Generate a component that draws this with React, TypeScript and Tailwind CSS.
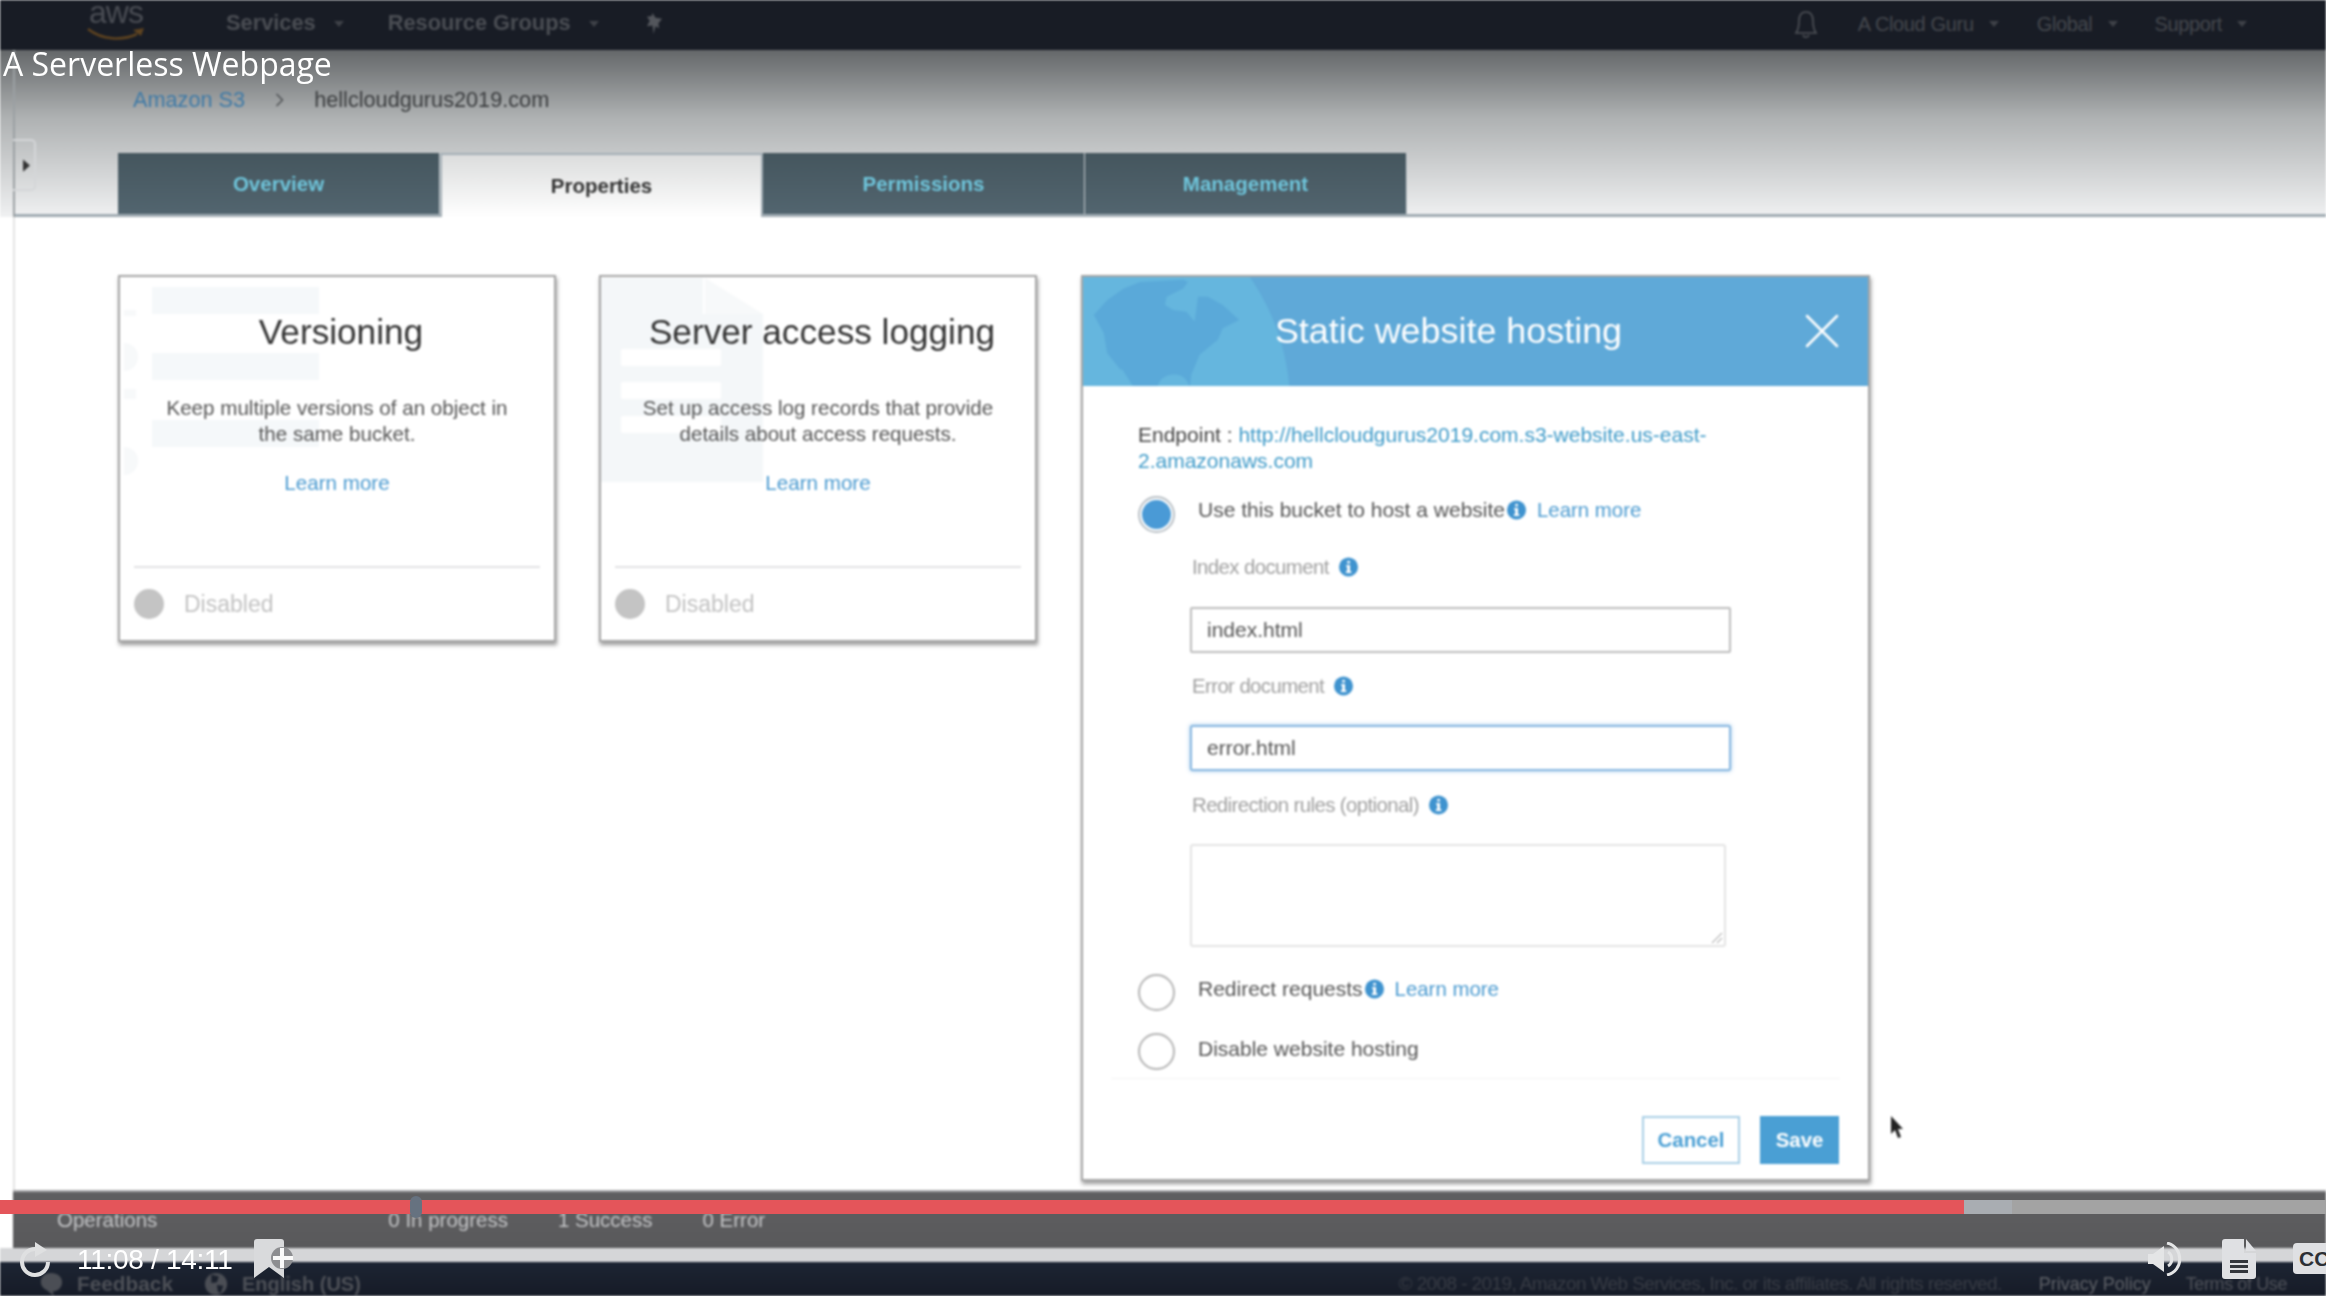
import React from "react";
import { X } from "lucide-react";

function Info({ className = "" }: { className?: string }) {
  return (
    <svg viewBox="0 0 20 20" className={`w-[19px] h-[20px] shrink-0 ${className}`}>
      <circle cx="10" cy="10" r="10" fill="#3f93cf" />
      <rect x="8.6" y="3.4" width="3" height="3" rx="1.4" fill="#fff" />
      <path d="M7.6 8h4v6.6h1.4V16.4H7.2v-1.8h1.4V9.8h-1z" fill="#fff" />
    </svg>
  );
}

function Caret({ dim = "#3f4248" }: { dim?: string }) {
  return (
    <svg viewBox="0 0 10 6" className="w-[10px] h-[6px]">
      <path d="M0 0h10L5 6z" fill={dim} />
    </svg>
  );
}

function Card({ title, lines, art }: { title: string; lines: string[]; art: React.ReactNode }) {
  return (
    <div className="relative w-[438px] h-[367px] flex flex-col items-stretch bg-white border-2 border-[#a6a6a6] shadow-[1px_3px_4px_rgba(0,0,0,0.4)] overflow-hidden">
      {art}
      <div className="relative text-center text-[35.2px] leading-[40px] text-[#333] pt-[35px] pl-[8px]">{title}</div>
      <div className="relative text-center text-[20.6px] leading-[26px] text-[#555] mt-[43px]">
        {lines.map((l) => (
          <div key={l}>{l}</div>
        ))}
      </div>
      <div className="relative text-center text-[20.6px] leading-[26px] text-[#4a9ad0] mt-[23px]">Learn more</div>
      <div className="relative mt-auto mx-[14px] border-t-2 border-[#e2e2e4] h-[74px] flex items-center gap-[20px]">
        <div className="w-[30px] h-[30px] rounded-full bg-[#c4c4c4]" />
        <div className="text-[23px] text-[#c2c2c2]">Disabled</div>
      </div>
    </div>
  );
}

function Radio({ on = false }: { on?: boolean }) {
  return (
    <div
      className={`w-[37px] h-[37px] rounded-full border-2 shrink-0 flex items-center justify-center bg-white ${on ? "border-[#b9c0c6]" : "border-[#b5b5b5]"}`}
    >
      {on && <div className="w-[29px] h-[29px] rounded-full bg-[#4a9ad6]" />}
    </div>
  );
}

function FieldLabel({ text }: { text: string }) {
  return (
    <div className="flex items-center gap-[10px] h-[24px] pl-[2px] text-[20.4px] text-[#a0a0a0] tracking-[-0.6px]">
      <span>{text}</span>
      <Info />
    </div>
  );
}

export default function App() {
  return (
    <div
      className="relative w-[2326px] h-[1296px] overflow-hidden flex flex-col bg-white"
      style={{ fontFamily: '"Liberation Sans", Arial, sans-serif' }}
    >
      <div className="flex flex-col h-full blur-[0.8px]">
        {/* AWS nav */}
        <div className="h-[50px] shrink-0 bg-[#181c25] flex items-center pb-[3px] text-[#4b4e54] text-[21.8px] font-bold">
          <div className="w-[60px] h-[47px] ml-[86px]">
            <div className="text-[32px] font-normal leading-[24px] text-center tracking-[-1px] text-[#4a4d54]">aws</div>
            <svg viewBox="0 0 60 14" className="w-[60px] h-[14px] mt-[3px]">
              <path d="M2 2c14 11 34 12 49 5" stroke="#5e4320" strokeWidth="2.6" fill="none" />
              <path d="M47 3l11-2-3 8z" fill="#5e4320" />
            </svg>
          </div>
          <span className="ml-[80px]">Services</span>
          <span className="ml-[18px]"><Caret /></span>
          <span className="ml-[44px]">Resource Groups</span>
          <span className="ml-[18px]"><Caret /></span>
          <svg viewBox="0 0 20 22" className="ml-[46px] w-[19px] h-[21px]">
            <path d="M8 0l3 5 7 1-4 5 1 5-4-2-2 8-1-9-6 1 3-6-3-4 5-1z" fill="#53565c" />
          </svg>
          <div className="ml-auto flex items-center font-normal text-[#45484e] text-[20px] tracking-[-0.35px]">
            <svg viewBox="0 0 24 28" className="w-[24px] h-[28px] mr-[40px] mt-[3px]" fill="none" stroke="#4f5258" strokeWidth="1.6">
              <path d="M12 1c-5 0-7 4-7 9 0 6-1 9-3 12h20c-2-3-3-6-3-12 0-5-2-9-7-9zM9 24c1 3 5 3 6 0" />
            </svg>
            <span>A Cloud Guru</span>
            <span className="ml-[15px]"><Caret /></span>
            <span className="ml-[38px]">Global</span>
            <span className="ml-[16px]"><Caret /></span>
            <span className="ml-[36px]">Support</span>
            <span className="ml-[15px] mr-[79px]"><Caret /></span>
          </div>
        </div>

        {/* Middle */}
        <div className="flex-1 flex flex-col min-h-0">
          {/* gradient header with breadcrumb and tabs */}
          <div className="h-[167px] shrink-0 bg-gradient-to-b from-[#65686a] via-[#aeb1b2] via-40% to-[#f0f1f2]">
            <div className="relative ml-[13px] h-full border-l-2 border-[#9ba0a3] flex flex-col">
              <div className="h-[103px] pl-[118px] pt-[38px] flex items-start text-[21.7px] leading-[24px]">
                <span className="text-[#3f7aa6]">Amazon S3</span>
                <span className="ml-[30px] text-[#4b4e50]">
                  <svg viewBox="0 0 8 14" className="w-[9px] h-[14px] mt-[5px]" fill="none" stroke="#4b4e50" strokeWidth="1.4"><path d="M1 1l6 6-6 6" /></svg>
                </span>
                <span className="ml-[30px] text-[#3a3c3e]">hellcloudgurus2019.com</span>
              </div>
              <div className="flex-1 flex items-stretch pl-[103px] border-b-[3px] border-[#a0abb2]">
                {["Overview", "Properties", "Permissions", "Management"].map((t, i) => (
                  <div
                    key={t}
                    className={
                      i === 1
                        ? "w-[323px] -mb-[3px] bg-gradient-to-b from-[#dcdddd] to-white border-x-2 border-t-2 border-[#a3aeb5] flex items-center justify-center text-[20.5px] font-bold text-[#333]"
                        : "w-[322px] bg-gradient-to-b from-[#45565e] to-[#52656f] border-r border-[#c7ccd0] flex items-center justify-center pt-[1px] text-[20.5px] font-bold text-[#6fc5db]"
                    }
                  >
                    {t}
                  </div>
                ))}
              </div>
              {/* drawer handle */}
              <div className="absolute left-[-2px] top-[89px] w-[23px] h-[52px] border-2 border-l-0 border-[#d4d6d8] rounded-r-[5px] flex items-center pl-[10px]">
                <svg viewBox="0 0 8 14" className="w-[7px] h-[13px]"><path d="M0 0l8 7-8 7z" fill="#333" /></svg>
              </div>
            </div>
          </div>

          {/* content */}
          <div className="flex-1 min-h-0 ml-[13px] border-l-2 border-[#e4e4e4] flex items-start gap-[43px] pl-[103px] pt-[58px]">
            <Card
              title="Versioning"
              lines={["Keep multiple versions of an object in", "the same bucket."]}
              art={
                <svg className="absolute left-0 top-0" width="220" height="240" viewBox="0 0 220 240">
                  <rect x="32" y="10" width="167" height="27" fill="#f5f8fa" />
                  <rect x="32" y="76" width="167" height="27" fill="#f5f8fa" />
                  <rect x="32" y="143" width="167" height="27" fill="#f5f8fa" />
                  <rect x="4" y="33" width="12" height="6" fill="#f7f9fa" />
                  <path d="M4 66a14 14 0 0 1 0 28zM4 170a14 14 0 0 1 0 28z" fill="#f7f9fa" />
                  <rect x="4" y="112" width="12" height="10" fill="#f7f9fa" />
                </svg>
              }
            />
            <Card
              title="Server access logging"
              lines={["Set up access log records that provide", "details about access requests."]}
              art={
                <svg className="absolute left-0 top-0" width="180" height="210" viewBox="0 0 180 210">
                  <path d="M0 1h102v36h60v168H0z" fill="#f4f7f9" />
                  <path d="M104 1l58 36h-58z" fill="#f7f9fa" />
                  <rect x="20" y="72" width="100" height="17" rx="2" fill="#fff" />
                  <rect x="20" y="105" width="100" height="17" rx="2" fill="#fff" />
                  <rect x="20" y="139" width="100" height="17" rx="2" fill="#fff" />
                </svg>
              }
            />

            {/* Static website hosting panel */}
            <div className="relative ml-[1px] w-[789px] h-[906px] bg-white border-2 border-[#a6a6a6] shadow-[1px_3px_4px_rgba(0,0,0,0.4)] flex flex-col">
              <div className="relative h-[109px] shrink-0 bg-[#5fa9d8] overflow-hidden flex items-center justify-center text-white">
                <svg className="absolute left-0 top-0" width="220" height="111" viewBox="0 0 660 336">
                  <circle cx="-60" cy="390" r="684" fill="#65b6de" />
                  <path
                    d="M30 115L70 70 120 35 170 15 300 8 315 15 300 35 250 60 245 85 270 100 310 105 335 135 345 60 375 60 420 85 470 130 420 155 405 190 350 235 325 295 320 336 150 336 110 280 70 230 60 170z"
                    fill="#5aa9d9"
                  />
                  <path d="M222 336c5-30 30-44 60-40 20 3 34 18 38 40z" fill="#65b6de" />
                  <path d="M108 280l36 56h8l-36-56z" fill="#65b6de" />
                </svg>
                <span className="relative text-[35.9px] ml-[-54px]">Static website hosting</span>
                <X className="absolute right-[16px] top-[24px]" size={60} strokeWidth={1} color="#fff" />
              </div>

              <div className="flex-1 pl-[55px] flex flex-col text-[21px] text-[#555]">
                <div className="mt-[36px] w-[600px] leading-[26px] text-[#444]">
                  Endpoint : <span className="text-[#3e9ac8]">http://hellcloudgurus2019.com.s3-website.us-east-2.amazonaws.com</span>
                </div>
                <div className="mt-[22px] flex items-start">
                  <Radio on />
                  <div className="ml-[23px] mt-[2px] flex items-center h-[24px]">
                    <span>Use this bucket to host a website</span>
                    <Info className="ml-[2px]" />
                    <span className="ml-[11px] text-[20.4px] text-[#4a9ad0]">Learn more</span>
                  </div>
                </div>
                <div className="ml-[52px] flex flex-col">
                  <div className="mt-[22px]"><FieldLabel text="Index document" /></div>
                  <div className="mt-[28px] w-[541px] h-[46px] border-2 border-[#bcbcbc] rounded-[2px] flex items-center pl-[15px] text-[#555]">index.html</div>
                  <div className="mt-[21px]"><FieldLabel text="Error document" /></div>
                  <div className="mt-[27px] w-[541px] h-[46px] border-2 border-[#86b6e0] rounded-[2px] shadow-[0_0_4px_rgba(90,160,220,0.6)] flex items-center pl-[15px] text-[#555]">error.html</div>
                  <div className="mt-[22px]"><FieldLabel text="Redirection rules (optional)" /></div>
                  <div className="relative mt-[27px] w-[536px] h-[103px] border-2 border-[#e4e4e4] rounded-[3px]">
                    <svg className="absolute right-[1px] bottom-[1px]" width="12" height="12" viewBox="0 0 12 12" fill="none" stroke="#8a8a8a" strokeWidth="1">
                      <path d="M1 11L11 1M6 11l5-5" />
                    </svg>
                  </div>
                </div>
                <div className="mt-[27px] flex items-start">
                  <Radio />
                  <div className="ml-[23px] mt-[3px] flex items-center h-[24px]">
                    <span>Redirect requests</span>
                    <Info className="ml-[2px]" />
                    <span className="ml-[11px] text-[20.4px] text-[#4a9ad0]">Learn more</span>
                  </div>
                </div>
                <div className="mt-[22px] flex items-start">
                  <Radio />
                  <div className="ml-[23px] mt-[4px] h-[24px] flex items-center">Disable website hosting</div>
                </div>
                <div className="mt-[8px] mr-[28px] ml-[-27px] border-t border-[#f4f4f4]" />
                <div className="mt-[37px] mr-[29px] flex justify-end gap-[20px] text-[20.4px] font-bold">
                  <div className="w-[98px] h-[48px] border-2 border-[#a9cfe6] text-[#4a9fd4] flex items-center justify-center">Cancel</div>
                  <div className="w-[79px] h-[48px] bg-[#4a9fd4] text-white flex items-center justify-center">Save</div>
                </div>
              </div>

              {/* mouse pointer */}
              <svg className="absolute left-[807px] top-[839px]" width="14" height="24" viewBox="0 0 14 24">
                <path d="M1 0v18l4-4 3 8 3-1-3-8h5z" fill="#222" />
              </svg>
            </div>
          </div>

          {/* operations bar */}
          <div className="h-[58px] shrink-0 ml-[13px] bg-gradient-to-b from-[#5f5f61] to-[#59595b] border-t-2 border-[#a7a7a9] flex items-end pb-[12px] pl-[44px] text-[20.5px] text-[#c3c4c6]">
            <span>Operations</span>
            <span className="ml-[231px]">0 In progress</span>
            <span className="ml-[50px]">1 Success</span>
            <span className="ml-[50px]">0 Error</span>
          </div>
          <div className="h-[14px] shrink-0 bg-[#d5d6d8]" />
        </div>

        {/* footer */}
        <div className="h-[34px] shrink-0 pt-[10px] bg-gradient-to-b from-[#1d2533] to-[#161b27] flex items-center text-[20px] leading-[24px] text-[#4d5057]">
          <svg className="ml-[38px]" width="26" height="24" viewBox="0 0 26 26"><path d="M13 1c7 0 12 4 12 10s-5 10-10 10l1 5-7-6c-4-2-7-5-7-9C2 5 6 1 13 1z" fill="#4b4e55" /></svg>
          <span className="ml-[13px] text-[20.8px] font-bold">Feedback</span>
          <svg className="ml-[30px]" width="26" height="24" viewBox="0 0 26 26"><circle cx="13" cy="13" r="12" fill="#4b4e55" /><path d="M8 3l8 2-2 6-6 1zM14 14l7 1-3 8-3-2z" fill="#1a202c" /></svg>
          <span className="ml-[13px] font-bold">English (US)</span>
          <span className="ml-auto text-[19px] text-[#383c45] tracking-[-0.6px]">© 2008 - 2019, Amazon Web Services, Inc. or its affiliates. All rights reserved.</span>
          <span className="ml-[37px] text-[18px] text-[#5e6167]">Privacy Policy</span>
          <span className="ml-[35px] mr-[39px] text-[18px] tracking-[-0.4px] text-[#4f525a]">Terms of Use</span>
        </div>
      </div>

      {/* video player overlay */}
      <div
        className="absolute left-[3px] top-[45px] text-[32px] leading-[38px] text-white"
        style={{ fontFamily: '"Open Sans", sans-serif' }}
      >
        A Serverless Webpage
      </div>
      <div className="absolute left-0 right-0 top-[1200px] h-[14px] flex bg-[#a3a3a3]">
        <div className="w-[1964px] bg-[#e4555a]" />
        <div className="w-[48px] bg-[#a9adb2]" />
      </div>
      <div className="absolute left-[410px] top-[1196px] w-[12px] h-[22px] rounded-full bg-[#667280]" />
      <svg className="absolute left-[20px] top-[1242px]" width="31" height="36" viewBox="0 0 31 36" fill="none" stroke="#dfe0e1" strokeWidth="4">
        <path d="M16 7A13 13 0 1 0 28 20" />
        <path d="M15 0l12 8-12 7z" fill="#dfe0e1" stroke="none" />
      </svg>
      <div className="absolute left-[77px] top-[1244px] text-[28px] leading-[32px] text-white tracking-[-0.3px]">11:08 / 14:11</div>
      <svg className="absolute left-[254px] top-[1238px]" width="42" height="42" viewBox="0 0 42 42">
        <path d="M0 4a3 3 0 0 1 3-3h24a3 3 0 0 1 3 3v36L15 29 0 40z" fill="#d9dadc" />
        <circle cx="28" cy="20" r="11" fill="#8d8e91" />
        <path d="M26 10h4v8h9v4h-9v8h-4v-8h-7v-4h7z" fill="#fafafa" />
      </svg>
      <svg className="absolute left-[2147px] top-[1242px]" width="38" height="34" viewBox="0 0 38 34" fill="#e4e5e6">
        <path d="M1 12h5L17 4v26L6 22H1z" />
        <path d="M21 10c5 3 5 11 0 14M20 1c17 4 17 28 0 32" fill="none" stroke="#e4e5e6" strokeWidth="3" />
      </svg>
      <svg className="absolute left-[2222px] top-[1239px]" width="34" height="40" viewBox="0 0 34 40">
        <path d="M3 0h19v14h12v23a3 3 0 0 1-3 3H3a3 3 0 0 1-3-3V3a3 3 0 0 1 3-3z" fill="#dfe0e3" />
        <path d="M24 0l10 12H24z" fill="#dfe0e3" />
        <path d="M8 21h18v3H8zM8 26h18v3H8zM8 31h18v3H8z" fill="#33363c" />
      </svg>
      <div className="absolute left-[2293px] top-[1243px] w-[40px] h-[31px] rounded-[4px] bg-[#dfe0e3] flex items-center pl-[6px] text-[#2c2f35] text-[21px] font-bold leading-none">CC</div>
    </div>
  );
}
